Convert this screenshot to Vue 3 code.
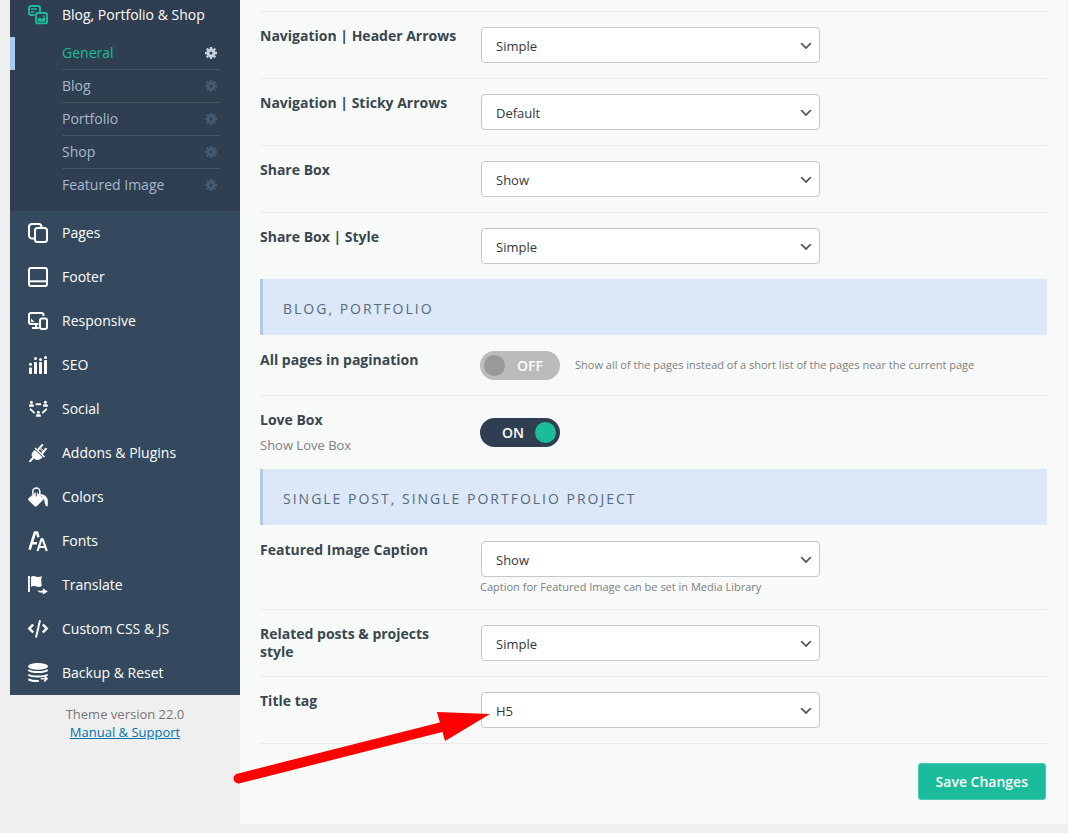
<script setup>
import { reactive } from 'vue'

const subItems = ['General', 'Blog', 'Portfolio', 'Shop', 'Featured Image']

const blogIcon =
  '<g fill="none" stroke="currentColor" stroke-width="1.9"><path d="M6.5 10H3a2 2 0 0 1-2-2V3a2 2 0 0 1 2-2h7a2 2 0 0 1 2 2v4"/><path d="M3 4h6M3 7h3.400" stroke-width="1.5"/><rect x="8" y="8" width="11" height="10.4" rx="2"/></g><path d="M10 16.8v-3l2-1.6 2 1.8 3-2.6v5.4z" fill="currentColor"/><circle cx="15.6" cy="11.2" r=".9" fill="currentColor"/>'

const menu = [
  { label: 'Pages', icon: '<g fill="none" stroke="currentColor" stroke-width="2"><path d="M6 15.5H4a3 3 0 0 1-3-3V4a3 3 0 0 1 3-3h6.500a3 3 0 0 1 3 3"/><rect x="7" y="5" width="12" height="14" rx="2.500"/></g>' },
  { label: 'Footer', icon: '<g fill="none" stroke="currentColor" stroke-width="2"><rect x="1" y="1" width="18" height="18" rx="2"/><path d="M1 14.300h18"/></g>' },
  { label: 'Responsive', icon: '<g fill="none" stroke="currentColor" stroke-width="2"><path d="M10.500 13H3a2 2 0 0 1-2-2V4a2 2 0 0 1 2-2h10.500a2 2 0 0 1 2 2v1"/><path d="M4 17h7M8 13.500V17"/><rect x="12" y="7.500" width="7" height="10.500" rx="2"/></g><path d="M3 7.500l3.500 3.500H3z" fill="currentColor"/>' },
  { label: 'SEO', icon: '<g fill="currentColor"><circle cx="2.500" cy="9.200" r="1.500"/><circle cx="7.500" cy="3.600" r="1.500"/><circle cx="12.500" cy="4.400" r="1.500"/><circle cx="17.500" cy="2.500" r="1.500"/><rect x="1" y="12.500" width="3" height="6.500" rx=".8"/><rect x="6" y="7" width="3" height="12" rx=".8"/><rect x="11" y="7" width="3" height="12" rx=".8"/><rect x="16" y="5" width="3" height="14" rx=".8"/></g>' },
  { label: 'Social', icon: '<g fill="currentColor"><circle cx="3.400" cy="3.300" r="1.500"/><path d="M1 7.800V6.200a1 1 0 0 1 1-1h2.800a1 1 0 0 1 1 1v1.600z"/><circle cx="17.400" cy="3.300" r="1.500"/><path d="M15 7.800V6.200a1 1 0 0 1 1-1h2.800a1 1 0 0 1 1 1v1.600z"/><circle cx="10.400" cy="13.300" r="1.500"/><path d="M8 17.800v-1.600a1 1 0 0 1 1-1h2.800a1 1 0 0 1 1 1v1.600z"/></g><path d="M8.400 5.200h4M2.600 10.300l3.400 3.400M18.200 10.300l-3.400 3.400" fill="none" stroke="currentColor" stroke-width="1.900" stroke-linecap="round"/>' },
  { label: 'Addons & Plugins', icon: '<g fill="none" stroke="currentColor" stroke-linecap="round"><path d="M2 18.300L6 14" stroke-width="2"/><path d="M10.500 6.200L14.300 2M14.500 10L18 5.700" stroke-width="2"/><path d="M7.500 5.500l8.500 8" stroke-width="1.700"/></g><path d="M6.900 6.900l7.700 7.300c-1.600 2-4.300 3.300-6.900 2.600l-3.900-3.600c-.8-2.300.7-5 3.100-6.300z" fill="currentColor"/><path d="M13 4.500l3.500 3.300-1.700 2-4-3.800z" fill="currentColor" opacity=".5"/>' },
  { label: 'Colors', icon: '<path d="M8.400 4.700l7.300 7.600L9 19a2 2 0 0 1-2.600 0L.7 13.500a1.700 1.700 0 0 1 0-2.400z" fill="currentColor"/><path d="M4.800 7.500V4.400a3.500 3.500 0 0 1 7 0v4.800" fill="none" stroke="currentColor" stroke-width="1.500"/><path d="M8.300 5v4.200" stroke="#34495e" stroke-width="1.100"/><path d="M11.500 7c4.500.3 8 2.400 8.300 6.300v5.100c0 1-1.100 1.300-1.900.3-.8-1-1.300-2.800-1.400-5.200z" fill="currentColor"/>' },
  { label: 'Fonts', icon: '<g fill="none" stroke="currentColor" stroke-linejoin="round"><path d="M1.600 18.700L6.900 1.500h2.300l1.100 4.700M4 12.300h5" stroke-width="2.600"/><path d="M9.500 20l4-12h1l4.300 12M11 16h6.500" stroke-width="2.200"/></g>' },
  { label: 'Translate', icon: '<g fill="currentColor"><path d="M0 1h1.900v16H0z"/><path d="M3 1.700c2-1 3.500-.6 5.300 0 2 .7 3.700.3 5.500-.7-.7 3.400-.7 6.500 0 10-1.900 1-3.600 1.300-5.500.5-1.800-.7-3.400-.6-5.300.3z"/><path d="M9.500 15.200c2 1 3.700.9 5.300.3V13.200l5 3.200-5 3v-1.900c-2.200.4-4 .1-5.300-2.300z"/></g>' },
  { label: 'Custom CSS & JS', icon: '<path d="M5.200 5.500L1.300 9.500l3.900 4M14.800 5.500l3.900 4-3.900 4" fill="none" stroke="currentColor" stroke-width="2.500"/><path d="M12 1.300L8 18.500" stroke="currentColor" stroke-width="2"/>' },
  { label: 'Backup & Reset', icon: '<ellipse cx="10" cy="3.400" rx="10" ry="3.400" fill="currentColor"/><g fill="none" stroke="currentColor" stroke-width="2"><path d="M.3 7c3.500 2.800 15.900 2.800 19.400 0M.3 11.800c3.500 2.400 15.900 2.400 19.400 0M.3 16.300c2.700 1.500 6.400 1.900 10.500 1.800"/><path d="M12.800 15.700h6M16.300 12.900l2.700 2.800-2.700 2.800" stroke-width="1.600"/></g>' }
]

const groups = reactive([
  {
    title: '',
    rows: [
      { id: 'header-arrows', type: 'select', label: 'Navigation | Header Arrows', value: 'Simple', options: ['Default', 'Simple', 'Hide'] },
      { id: 'sticky-arrows', type: 'select', label: 'Navigation | Sticky Arrows', value: 'Default', options: ['Default', 'Simple', 'Hide'] },
      { id: 'share-box', type: 'select', label: 'Share Box', value: 'Show', options: ['Show', 'Hide'] },
      { id: 'share-style', type: 'select', label: 'Share Box | Style', value: 'Simple', options: ['Classic', 'Simple'] }
    ]
  },
  {
    title: 'Blog, Portfolio',
    rows: [
      { id: 'all-pages', type: 'toggle', label: 'All pages in pagination', value: false, hint: 'Show all of the pages instead of a short list of the pages near the current page' },
      { id: 'love-box', type: 'toggle', label: 'Love Box', sub: 'Show Love Box', value: true }
    ]
  },
  {
    title: 'Single Post, Single Portfolio Project',
    rows: [
      { id: 'caption', type: 'select', label: 'Featured Image Caption', value: 'Show', options: ['Show', 'Hide'], hint: 'Caption for Featured Image can be set in Media Library' },
      { id: 'related-style', type: 'select', label: 'Related posts & projects style', value: 'Simple', options: ['Default', 'Simple'] },
      { id: 'title-tag', type: 'select', label: 'Title tag', value: 'H5', options: ['H1', 'H2', 'H3', 'H4', 'H5', 'H6'], pointer: true }
    ]
  }
])
</script>

<template>
  <div class="page">
    <aside class="sidebar">
      <nav class="menu">
        <div class="current">
          <a href="#" class="current-title">
            <svg class="icon" viewBox="0 0 20 20" aria-hidden="true" v-html="blogIcon"></svg>
            <span>Blog, Portfolio &amp; Shop</span>
          </a>
          <ul class="submenu">
            <li v-for="(item, i) in subItems" :key="item" :class="{ active: i === 0 }">
              <a href="#">
                <span>{{ item }}</span>
                <svg class="gear" viewBox="0 0 12 12" aria-hidden="true">
                  <circle cx="6" cy="6" r="3" fill="none" stroke="currentColor" stroke-width="3" />
                  <path d="M6 0v2M6 10v2M0 6h2M10 6h2M1.700 1.700l1.300 1.300M9 9l1.300 1.300M1.700 10.300l1.300-1.300M9 3l1.300-1.300" stroke="currentColor" stroke-width="2.400" />
                </svg>
              </a>
            </li>
          </ul>
        </div>
        <ul class="main-list">
          <li v-for="item in menu" :key="item.label">
            <a href="#">
              <svg class="icon" viewBox="0 0 20 20" aria-hidden="true" v-html="item.icon"></svg>
              <span>{{ item.label }}</span>
            </a>
          </li>
        </ul>
      </nav>
      <p class="version">Theme version 22.0<br /><a href="#">Manual &amp; Support</a></p>
    </aside>

    <form class="panel" @submit.prevent>
      <section v-for="(group, g) in groups" :key="g" class="group">
        <h2 v-if="group.title" class="banner">{{ group.title }}</h2>
        <div v-for="row in group.rows" :key="row.id" class="row" :class="row.type">
          <div class="info">
            <label class="name" :for="row.id">{{ row.label }}</label>
            <p v-if="row.sub" class="sub">{{ row.sub }}</p>
          </div>
          <div v-if="row.type === 'select'" class="field">
            <div class="select-box">
              <select :id="row.id" v-model="row.value">
                <option v-for="o in row.options" :key="o">{{ o }}</option>
              </select>
              <svg class="chevron" viewBox="0 0 20 20" aria-hidden="true"><path d="M5 6l5 5 5-5 2 1-7 7-7-7z" fill="#555" /></svg>
            </div>
            <p v-if="row.hint" class="hint">{{ row.hint }}</p>
          </div>
          <div v-else class="field">
            <label class="switch" :class="{ on: row.value }">
              <input :id="row.id" v-model="row.value" type="checkbox" />
              <span class="state">{{ row.value ? 'ON' : 'OFF' }}</span>
              <span class="knob"></span>
            </label>
            <p v-if="row.hint" class="hint">{{ row.hint }}</p>
          </div>
          <svg v-if="row.pointer" class="pointer" viewBox="0 0 260 80" aria-hidden="true">
            <path d="M8.500 71.500L214 19.500" stroke="#f00" stroke-width="10" stroke-linecap="round" />
            <path d="M207 5l53 2-45 27z" fill="#f00" />
          </svg>
        </div>
      </section>
      <div class="actions"><button type="submit">Save Changes</button></div>
    </form>
  </div>
</template>

<style>
body {
  background: #efefef;
}
</style>

<style scoped>
.page {
  display: flex;
  align-items: flex-start;
  padding: 0 1px 8px 10px;
  font-family: "Open Sans", "Noto Sans", sans-serif;
  font-size: 14px;
}
ul, p, h2 {
  margin: 0;
  padding: 0;
  list-style: none;
}
a {
  text-decoration: none;
}
.sidebar {
  flex: 0 0 230px;
}
.menu {
  background: #34495e;
}
.current {
  background: #2f3e50;
  padding-bottom: 9px;
}
.current-title {
  display: flex;
  align-items: center;
  gap: 14px;
  height: 29px;
  padding: 0 18px 8px;
  color: #fff;
}
.icon {
  flex: none;
  width: 20px;
  height: 20px;
  overflow: visible;
}
.current-title .icon {
  color: #1abc9c;
}
.submenu li {
  padding: 0 20px 0 52px;
}
.submenu li.active {
  padding-left: 47px;
  border-left: 5px solid #a8cbf0;
}
.submenu a {
  display: flex;
  align-items: center;
  justify-content: space-between;
  height: 32px;
  padding-right: 3px;
  color: #a7b9cc;
  border-bottom: 1px solid #44535f;
}
.submenu span,
.main-list span {
  padding-bottom: 2px;
}
.submenu li:last-child a {
  border-color: transparent;
}
.submenu .active a {
  color: #1abc9c;
}
.gear {
  width: 12px;
  height: 12px;
  color: #445a73;
}
.submenu .active .gear {
  color: #c6d2e0;
}
.main-list a {
  display: flex;
  align-items: center;
  gap: 14px;
  height: 44px;
  padding: 0 18px;
  color: #fff;
}
.version {
  padding-top: 10px;
  font-size: 13px;
  line-height: 18px;
  text-align: center;
  color: #777;
}
.version a {
  color: #0073aa;
  text-decoration: underline;
}
.panel {
  flex: 1;
  min-width: 0;
  padding: 11px 20px 24px;
  background: #f8faf9;
}
.group:first-child {
  border-top: 1px solid #e9eceb;
}
.banner {
  margin-bottom: 1px;
  padding: 4px 20px 0;
  border-left: 3px solid #b5c9e5;
  background: #dce7f7;
  color: #566b7c;
  font-size: 14px;
  font-weight: 400;
  line-height: 52px;
  letter-spacing: 2px;
  text-transform: uppercase;
}
.row {
  position: relative;
  display: flex;
  padding: 15px 0 12px;
  border-bottom: 1px solid #e9eceb;
}
.row.select {
  min-height: 39px;
}
.row.toggle {
  align-items: center;
  padding-bottom: 15px;
}
.group:not(:nth-last-child(2)) .row:last-child {
  border-bottom: 0;
}
.info {
  flex: 0 0 200px;
  margin-right: 20px;
  align-self: flex-start;
}
.name {
  display: block;
  font-weight: 700;
  line-height: 18px;
  color: #39474f;
}
.sub {
  margin-top: 7px;
  font-size: 13px;
  line-height: 18px;
  color: #808080;
}
.field {
  flex: 1;
  min-width: 0;
}
.toggle .field {
  display: flex;
  align-items: center;
  gap: 15px;
}
.select-box {
  position: relative;
  max-width: 339px;
  margin-left: 1px;
}
select {
  display: block;
  appearance: none;
  box-sizing: border-box;
  width: 100%;
  height: 36px;
  margin: 0;
  padding: 2px 30px 0 14px;
  border: 1px solid #c5c8c8;
  border-radius: 4px;
  background: #fff;
  color: #32373c;
  font-family: inherit;
  font-size: 13px;
}
.chevron {
  position: absolute;
  right: 6px;
  top: 11px;
  width: 16px;
  height: 16px;
  pointer-events: none;
}
.hint {
  font-size: 11px;
  line-height: 20px;
  color: #808080;
}
.toggle .hint {
  padding-bottom: 2px;
}
.switch {
  position: relative;
  display: flex;
  align-items: center;
  flex-direction: row-reverse;
  justify-content: space-between;
  box-sizing: border-box;
  width: 80px;
  height: 29px;
  padding: 0 17px 0 4px;
  border-radius: 15px;
  background: #bbb;
  color: #fff;
  font-weight: 600;
}
.switch.on {
  flex-direction: row;
  padding: 0 4px 0 22px;
  background: #2f3e50;
}
.switch input {
  position: absolute;
  inset: 0;
  width: 100%;
  height: 100%;
  margin: 0;
  opacity: 0;
}
.knob {
  width: 21px;
  height: 21px;
  border-radius: 50%;
  background: #999;
}
.on .knob {
  background: #1abc9c;
}
.pointer {
  position: absolute;
  left: -30px;
  top: 30px;
  width: 260px;
  height: 80px;
  fill: none;
  pointer-events: none;
}
.actions {
  display: flex;
  justify-content: flex-end;
  padding: 19px 1px 0 0;
}
button {
  height: 37px;
  padding: 0 17px;
  border: 1px solid #48c9b0;
  border-radius: 3px;
  background: #1abc9c;
  color: #fff;
  font-family: inherit;
  font-size: 14px;
  font-weight: 600;
}
</style>
